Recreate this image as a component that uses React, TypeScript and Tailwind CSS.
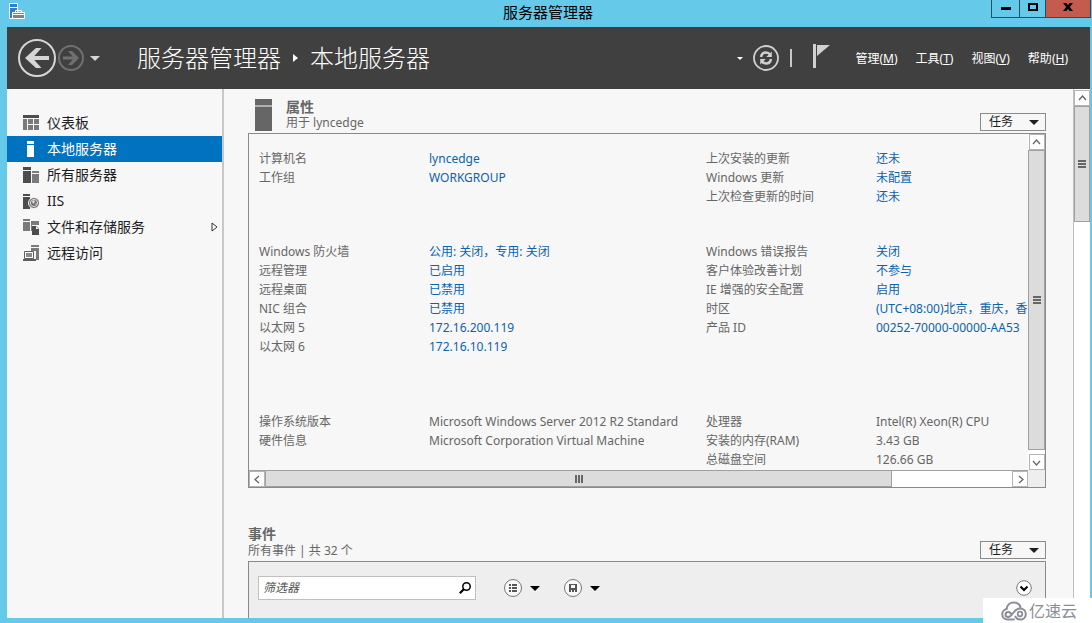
import React from 'react'
import { clsx } from 'clsx'

interface NavItem {
  label: string
  icon: React.ReactNode
  active?: boolean
  expandable?: boolean
}

interface Property {
  label: string
  value: string
  link?: boolean
}

const navItems: NavItem[] = [
  {
    label: '仪表板',
    icon: (
      <>
        <path fill="#4d4d4d" d="M0 0h16v3H0z" />
        <path fill="#7a7a7a" d="M0 4h4v11H0zM5 4h5v5H5zM11 4h5v5h-5zM5 10h5v5H5zM11 10h5v5h-5z" />
      </>
    )
  },
  {
    label: '本地服务器',
    active: true,
    icon: <path fill="#fff" d="M4 0h7v3H4zM4 4h7v12H4z" />
  },
  {
    label: '所有服务器',
    icon: (
      <>
        <path fill="#4d4d4d" d="M0 0h8v3H0zM0 4h8v12H0z" />
        <path fill="#7a7a7a" d="M9 4h7v2H9zM9 7h7v9H9z" />
      </>
    )
  },
  {
    label: 'IIS',
    icon: (
      <>
        <path fill="#4d4d4d" d="M0 1h7v2H0zM0 4h7v12H0z" />
        <circle cx="11" cy="10" r="5.5" fill="#6e6e6e" stroke="#f7f7f7" />
        <circle cx="11" cy="10" r="3.6" fill="none" stroke="#ddd" />
        <path fill="#ddd" d="M9 8l2-1 1 2-2 2zM12 11l2-1-1 2z" />
      </>
    )
  },
  {
    label: '文件和存储服务',
    expandable: true,
    icon: (
      <>
        <path fill="#7a7a7a" d="M0 0h7v2H0zM0 3h7v9H0zM8 2h8v4H8zM8 6h1v6H8z" />
        <path fill="#4d4d4d" d="M9 7h4.500l2.500 2.500V16H9z" />
        <path fill="#f7f7f7" d="M13 7v3h3z" />
      </>
    )
  },
  {
    label: '远程访问',
    icon: (
      <>
        <path fill="#7a7a7a" d="M8 0h8v2H8zM8 3h8v12h-3V6H8z" />
        <path fill="#fff" stroke="#5e5e5e" d="M1.500 6.500h9v7h-9z" />
        <path fill="#8a8a8a" d="M3 8h6v4H3z" />
        <path fill="#5e5e5e" d="M0 14h13v2H0z" />
      </>
    )
  }
]

const leftGroups: Property[][] = [
  [
    { label: '计算机名', value: 'lyncedge', link: true },
    { label: '工作组', value: 'WORKGROUP', link: true }
  ],
  [
    { label: 'Windows 防火墙', value: '公用: 关闭，专用: 关闭', link: true },
    { label: '远程管理', value: '已启用', link: true },
    { label: '远程桌面', value: '已禁用', link: true },
    { label: 'NIC 组合', value: '已禁用', link: true },
    { label: '以太网 5', value: '172.16.200.119', link: true },
    { label: '以太网 6', value: '172.16.10.119', link: true }
  ],
  [
    { label: '操作系统版本', value: 'Microsoft Windows Server 2012 R2 Standard' },
    { label: '硬件信息', value: 'Microsoft Corporation Virtual Machine' }
  ]
]

const rightGroups: Property[][] = [
  [
    { label: '上次安装的更新', value: '还未', link: true },
    { label: 'Windows 更新', value: '未配置', link: true },
    { label: '上次检查更新的时间', value: '还未', link: true }
  ],
  [
    { label: 'Windows 错误报告', value: '关闭', link: true },
    { label: '客户体验改善计划', value: '不参与', link: true },
    { label: 'IE 增强的安全配置', value: '启用', link: true },
    { label: '时区', value: '(UTC+08:00)北京，重庆，香', link: true },
    { label: '产品 ID', value: '00252-70000-00000-AA53', link: true }
  ],
  [
    { label: '处理器', value: 'Intel(R) Xeon(R) CPU' },
    { label: '安装的内存(RAM)', value: '3.43 GB' },
    { label: '总磁盘空间', value: '126.66 GB' }
  ]
]

const menus = [
  { label: '管理', accessKey: 'M' },
  { label: '工具', accessKey: 'T' },
  { label: '视图', accessKey: 'V' },
  { label: '帮助', accessKey: 'H' }
]

const Caret: React.FC<{ className?: string }> = ({ className }) => (
  <svg viewBox="0 0 10 5" className={clsx('h-[5px] w-[10px] fill-current', className)}>
    <path d="M0 0h10L5 5z" />
  </svg>
)

const arrowPaths = {
  up: 'M1 6l3.500-4L8 6',
  down: 'M1 3l3.500 4L8 3',
  left: 'M6 1L2 4.500 6 8',
  right: 'M3 1l4 3.500L3 8'
}

const ScrollArrow: React.FC<{ dir: keyof typeof arrowPaths }> = ({ dir }) => (
  <button
    type="button"
    aria-label={dir}
    className="flex h-4 w-4 shrink-0 items-center justify-center border border-[#b4b4b4] bg-white"
  >
    <svg viewBox="0 0 9 9" className="h-[9px] w-[9px] shrink-0" fill="none" stroke="#666" strokeWidth="1.3">
      <path d={arrowPaths[dir]} />
    </svg>
  </button>
)

const Grip: React.FC<{ vertical?: boolean }> = ({ vertical }) => (
  <svg viewBox="0 0 8 8" className={clsx('h-2 w-2', !vertical && 'rotate-90')} fill="#666">
    <path d="M0 0h8v2H0zM0 3h8v2H0zM0 6h8v2H0z" />
  </svg>
)

const PropertyColumn: React.FC<{ groups: Property[][]; className?: string }> = ({ groups, className }) => (
  <div className={clsx('flex flex-col', className)}>
    {groups.map((group, index) => (
      <dl
        key={index}
        className={clsx(index === 0 && 'h-[93px]', index === 1 && 'h-[170px]', index === 2 && 'h-[58px]')}
      >
        {group.map((item) => (
          <div key={item.label} className="flex leading-[19px] whitespace-nowrap">
            <dt className="w-[170px] shrink-0">{item.label}</dt>
            <dd className="min-w-0 overflow-hidden">
              {item.link ? <a href="#" className="text-[#0a63b0]">{item.value}</a> : item.value}
            </dd>
          </div>
        ))}
      </dl>
    ))}
  </div>
)

const TaskButton = () => (
  <button
    type="button"
    aria-haspopup="menu"
    className="flex h-[18px] w-[66px] items-center justify-between border border-[#8a8a8a] bg-[#f7f7f7] pr-1.5 pl-2 text-xs text-[#1e1e1e]"
  >
    任务
    <Caret />
  </button>
)

const TitleBar = () => (
  <div className="relative flex h-[27px] shrink-0 items-start justify-between">
    <svg viewBox="0 0 17 17" className="mt-[3px] ml-[9px] h-[17px] w-[17px]">
      <path fill="#2b7fd0" stroke="#fff" d="M.5.500h8v15h-8z" />
      <path stroke="#fff" d="M1 4.500h7" />
      <path fill="#76868e" stroke="#fff" d="M3.500 9.500h12v6h-12z" />
      <path fill="none" stroke="#fff" d="M6.500 9.500v-2h6v2M4 11.500h11" />
    </svg>
    <h1 className="absolute inset-x-0 top-0 pl-1 text-center text-[15px] leading-6 text-black">服务器管理器</h1>
    <div className="relative mr-px flex h-[18px] border border-t-0 border-[#20506a]">
      <button type="button" aria-label="最小化" className="flex w-7 items-center justify-center border-r border-[#20506a]">
        <span className="h-[3px] w-2.5 bg-black" />
      </button>
      <button type="button" aria-label="最大化" className="flex w-[26px] items-start justify-center border-r border-[#20506a]">
        <span className="mt-[3px] h-2 w-2.5 border-2 border-black" />
      </button>
      <button type="button" aria-label="关闭" className="flex w-11 items-start justify-center bg-[#c35b4e]">
        <svg viewBox="0 0 10 8" className="mt-[3px] h-2 w-2.5">
          <path d="M0 0h3.500L5 2.300 6.500 0H10L6.800 4 10 8H6.500L5 5.700 3.500 8H0l3.200-4z" />
        </svg>
      </button>
    </div>
  </div>
)

const NavHeader = () => (
  <header className="flex h-[62px] shrink-0 items-center bg-[#404040] text-white">
    <button type="button" aria-label="后退" className="ml-[11px]">
      <svg viewBox="0 0 38 38" className="h-[38px] w-[38px]" fill="none" stroke="#d6d6d6">
        <circle cx="19" cy="19" r="18" strokeWidth="2" />
        <path strokeWidth="4" d="M31 19H11" />
        <path fill="#d6d6d6" stroke="none" d="M7 19L18 9h5.500l-9 10 9 10H18z" />
      </svg>
    </button>
    <button type="button" aria-label="前进" className="ml-0.5">
      <svg viewBox="0 0 26 26" className="h-[26px] w-[26px]" fill="none" stroke="#707070">
        <circle cx="13" cy="13" r="12" strokeWidth="2" />
        <path strokeWidth="3" d="M5 13h14" />
        <path fill="#707070" stroke="none" d="M21 13l-7 7h-4l6-7-6-7h4z" />
      </svg>
    </button>
    <Caret className="ml-[6px] text-[#d6d6d6]" />
    <nav className="ml-[37px] flex items-center text-2xl font-light">
      <span>服务器管理器</span>
      <svg viewBox="0 0 5 8" className="mx-3 h-2 w-[5px]" fill="#fff">
        <path d="M0 0l5 4-5 4z" />
      </svg>
      <span>本地服务器</span>
    </nav>
    <div className="mr-[22px] ml-auto flex items-center">
      <svg viewBox="0 0 6 3" className="h-[3px] w-1.5" fill="#fff">
        <path d="M0 0h6L3 3z" />
      </svg>
      <button type="button" aria-label="刷新" className="ml-2.5">
        <svg viewBox="0 0 26 26" className="h-[26px] w-[26px]" fill="none" stroke="#d0d0d0">
          <circle cx="13" cy="13" r="12" strokeWidth="1.8" />
          <path strokeWidth="2.400" d="M8 12c.5-3 2.500-4.500 5-4.500 1.700 0 3 .6 4 2M18 14c-.5 3-2.500 4.500-5 4.500-1.700 0-3-.6-4-2" />
          <path fill="#d0d0d0" stroke="none" d="M18.800 6.500V12h-5.500zM7.200 19.500V14h5.500z" />
        </svg>
      </button>
      <span className="ml-[11px] h-[18px] w-0.5 bg-[#c8c8c8]" />
      <button type="button" aria-label="通知" className="ml-[21px]">
        <svg viewBox="0 0 17 24" className="mb-1 h-6 w-[17px]" fill="#d0d0d0">
          <path d="M0 0h3v24H0zM4 1h13L4 12z" />
        </svg>
      </button>
      <div className="ml-[25px] flex gap-[18px] pt-0.5 text-xs">
        {menus.map((menu) => (
          <button type="button" key={menu.accessKey}>
            {menu.label}(<span className="underline">{menu.accessKey}</span>)
          </button>
        ))}
      </div>
    </div>
  </header>
)

const Sidebar = () => (
  <nav className="w-[217px] shrink-0 border-r-2 border-[#c8c8c8] pt-[21px]">
    {navItems.map((item) => (
      <a
        key={item.label}
        href="#"
        className={clsx(
          'flex h-[26px] items-center pr-1 pl-4 text-sm',
          item.active ? 'bg-[#0072bf] text-white' : 'text-[#1e1e1e]'
        )}
      >
        <svg viewBox="0 0 16 16" className="mr-2 h-4 w-4">
          {item.icon}
        </svg>
        {item.label}
        {item.expandable && (
          <svg viewBox="0 0 7 10" className="ml-auto h-2.5 w-[7px]" fill="#fff" stroke="#333">
            <path d="M1 1l5 4-5 4z" />
          </svg>
        )}
      </a>
    ))}
  </nav>
)

const PropertiesSection = () => (
  <section>
    <div className="flex h-11 items-end">
      <svg viewBox="0 0 17 32" className="mr-3.5 mb-0.5 ml-[7px] h-8 w-[17px]">
        <path fill="#666" d="M0 0h17v32H0z" />
        <path fill="#b0b0b0" d="M0 6h17v2H0z" />
      </svg>
      <div className="mb-0.5">
        <h2 className="text-sm leading-4 font-bold">属性</h2>
        <p className="leading-4">用于 lyncedge</p>
      </div>
      <div className="mb-0.5 ml-auto">
        <TaskButton />
      </div>
    </div>
    <div className="border border-[#8a8a8a]">
      <div className="flex">
        <div className="flex min-w-0 flex-1 overflow-hidden pt-[15px] pl-2.5">
          <PropertyColumn groups={leftGroups} className="w-[447px] shrink-0" />
          <PropertyColumn groups={rightGroups} className="min-w-0 flex-1" />
        </div>
        <div className="flex w-[17px] flex-col items-center bg-white">
          <ScrollArrow dir="up" />
          <div className="mb-1 flex w-full flex-1 items-center justify-center border border-[#a0a0a0] bg-[#dcdcdc]">
            <Grip vertical />
          </div>
          <ScrollArrow dir="down" />
        </div>
      </div>
      <div className="flex h-[17px] bg-[#eee] pr-[17px]">
        <div className="flex flex-1 items-center border-t border-[#a0a0a0] bg-white">
          <ScrollArrow dir="left" />
          <div className="h-full flex-1">
            <div className="flex h-full w-[84%] items-center justify-center border-x border-b border-[#a0a0a0] bg-[#dcdcdc]">
              <Grip />
            </div>
          </div>
          <ScrollArrow dir="right" />
        </div>
      </div>
    </div>
  </section>
)

const EventsSection = () => (
  <section className="mt-[38px]">
    <div className="flex items-end">
      <div className="mb-0.5">
        <h2 className="text-sm leading-4 font-bold">事件</h2>
        <p className="leading-[17px]">所有事件 | 共 32 个</p>
      </div>
      <div className="mb-0.5 ml-auto">
        <TaskButton />
      </div>
    </div>
    <div className="flex h-24 items-start border border-[#8a8a8a] bg-[#eee] px-[9px] pt-3.5 text-black">
      <label className="flex h-6 w-[218px] items-center border border-[#c0c0c0] bg-white px-1">
        <input
          type="text"
          aria-label="筛选器"
          placeholder="筛选器"
          className="min-w-0 flex-1 text-xs italic outline-none placeholder:text-[#555]"
        />
        <svg viewBox="0 0 12 12" className="h-3 w-3" fill="none" stroke="#000">
          <circle cx="7.500" cy="4.500" r="3.700" strokeWidth="1.500" />
          <path strokeWidth="2.200" d="M5 7L.8 11.200" />
        </svg>
      </label>
      <button type="button" aria-label="查询" className="ml-[27px] flex h-6 items-center gap-[7px]">
        <svg viewBox="0 0 20 20" className="h-5 w-5">
          <circle cx="10" cy="10" r="8.500" fill="#f8f8f8" stroke="#777" />
          <path fill="#555" d="M6 6h2v2H6zM9 6h5v2H9zM6 9h2v2H6zM9 9h5v2H9zM6 12h2v2H6zM9 12h5v2H9z" />
        </svg>
        <Caret />
      </button>
      <button type="button" aria-label="保存" className="ml-[23px] flex h-6 items-center gap-[7px]">
        <svg viewBox="0 0 20 20" className="h-5 w-5">
          <circle cx="10" cy="10" r="8.500" fill="#f8f8f8" stroke="#777" />
          <path fill="#555" fillRule="evenodd" d="M6 6h8v8H6zM8 7v3h4V7zM8 12v2h1v-2zM11 12v2h1v-2z" />
        </svg>
        <Caret />
      </button>
      <button type="button" aria-label="展开" className="mr-1 ml-auto flex h-6 items-center">
        <svg viewBox="0 0 16 16" className="h-4 w-4" fill="#fff" stroke="#777">
          <circle cx="8" cy="8" r="7.300" />
          <path fill="none" stroke="#000" strokeWidth="2" d="M4.500 6.500L8 10l3.500-3.500" />
        </svg>
      </button>
    </div>
  </section>
)

const Watermark = () => (
  <div className="absolute right-0 bottom-0 flex h-[25px] w-[109px] items-center bg-white pl-[18px] text-base leading-6 text-[#8b8e98]">
    <svg viewBox="0 0 26 20" className="mr-0.5 h-5 w-[26px]" fill="none" stroke="#8b8e98" strokeWidth="2">
      <path d="M5.500 8C6 4 9 1.500 12.700 1.500c3.600 0 6.300 2.200 7 5.500" />
      <path d="M10 13.500c0-1.500-1.200-2.500-2.700-2.500S4.500 12.200 4.500 13.700 5.700 16 7.300 16c4.200 0 5-8.500 11.700-8.500 3.300 0 5.800 2.300 5.800 5.500s-2.500 5.500-5.500 5.500c-2.600 0-4.300-1.500-5.300-3.500" />
      <path d="M6.500 8C3.300 8.200 1.200 10.500 1.200 13.300c0 3 2.300 5.200 5.500 5.200h7" />
      <circle cx="19" cy="13" r="2.300" strokeWidth="1.800" />
    </svg>
    亿速云
  </div>
)

export default function App() {
  return (
    <div className="relative flex h-screen flex-col overflow-hidden bg-[#65c9ea] font-['Noto_Sans','Noto_Sans_CJK_SC',sans-serif] text-xs text-[#666]">
      <TitleBar />
      <div className="mr-0.5 mb-[5px] ml-[7px] flex min-h-0 flex-1 flex-col bg-[#f7f7f7]">
        <NavHeader />
        <div className="flex min-h-0 flex-1">
          <Sidebar />
          <main className="min-w-0 flex-1 overflow-hidden pr-[27px] pl-6">
            <PropertiesSection />
            <EventsSection />
          </main>
          <div className="flex w-[17px] shrink-0 flex-col items-center border-l border-[#c0c0c0] bg-white pt-px">
            <ScrollArrow dir="up" />
            <div className="flex h-[116px] w-full items-center justify-center border border-[#a0a0a0] bg-[#dcdcdc]">
              <Grip vertical />
            </div>
          </div>
        </div>
      </div>
      <Watermark />
    </div>
  )
}
